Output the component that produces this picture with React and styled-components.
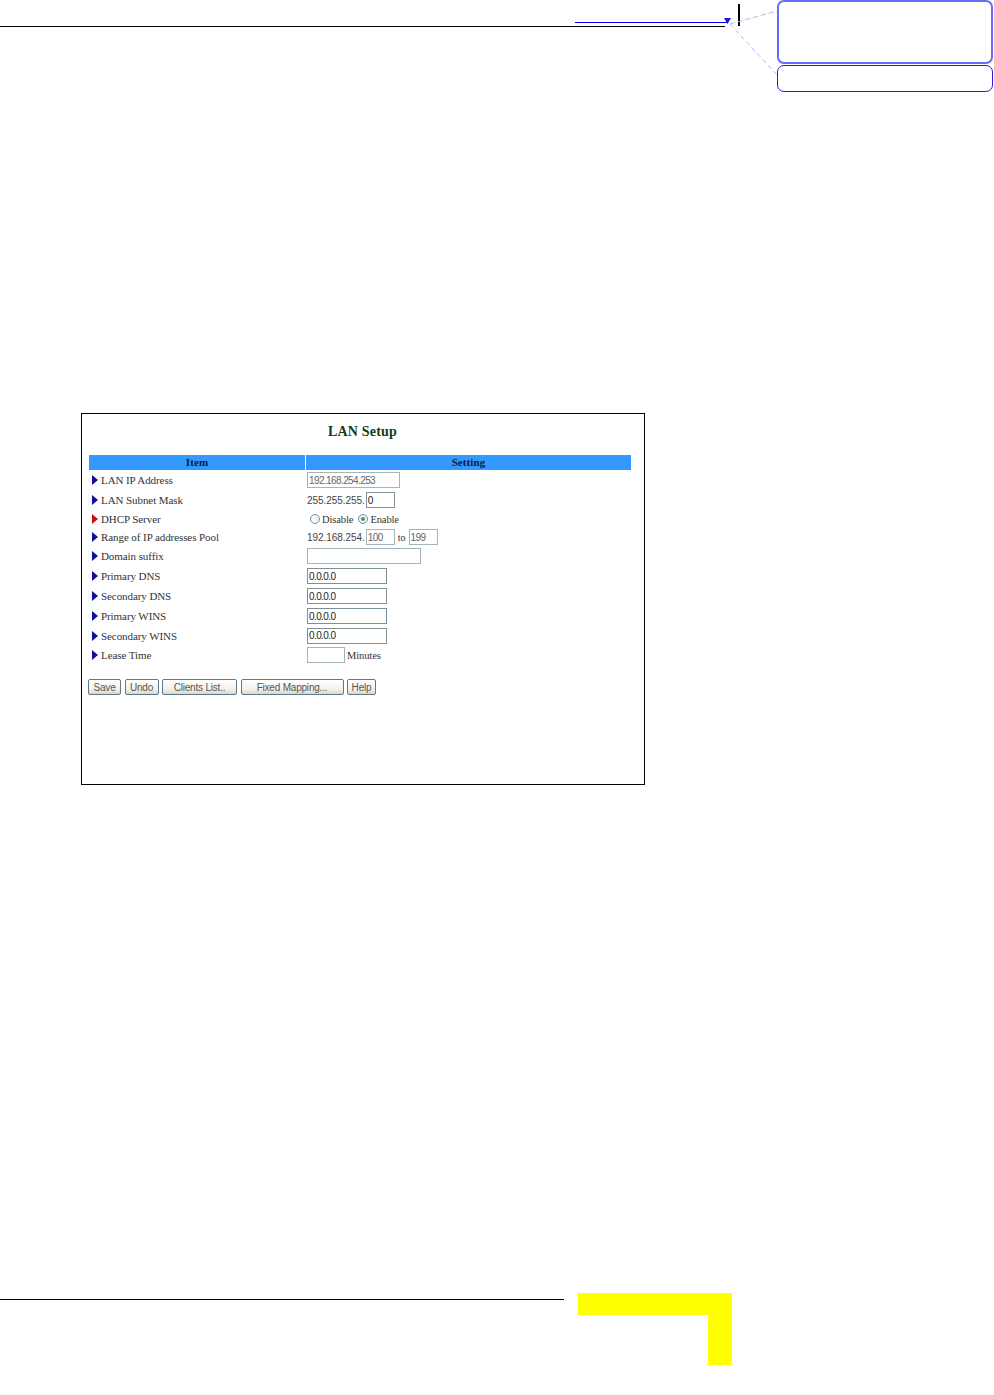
import React from 'react'
import styled, { createGlobalStyle } from 'styled-components'

const GlobalStyle = createGlobalStyle`
  html, body {
    margin: 0;
    padding: 0;
    background: #fff;
  }
`

const Page = styled.div`
  position: relative;
  width: 994px;
  height: 1395px;
  overflow: hidden;
  display: flex;
  flex-direction: column;
  font-family: 'Liberation Serif', serif;
`

const Header = styled.header`
  display: flex;
  height: 92px;
  flex: none;
`

const HeaderRule = styled.div`
  width: 725px;
  height: 26px;
  border-bottom: 1px solid #000;
  flex: none;
`

const RunningLink = styled.div`
  width: 152px;
  height: 22px;
  margin-left: 575px;
  border-bottom: 1px solid #0000ff;
`

const ChangeBar = styled.div`
  width: 2px;
  height: 22px;
  margin: 4px 0 0 13px;
  background: #000;
  flex: none;
`

const Callouts = styled.div`
  display: flex;
  flex-direction: column;
  gap: 1px;
  margin-left: 37px;
  width: 216px;
`

const Callout = styled.div`
  box-sizing: border-box;
  height: ${(p) => p.$h}px;
  border: ${(p) => (p.$strong ? '2px solid #6a6af8' : '1px solid #2020e0')};
  border-radius: 7px;
  background: #fff;
`

const Leaders = styled.svg`
  position: absolute;
  top: 0;
  left: 720px;
`

const Panel = styled.section`
  box-sizing: border-box;
  width: 564px;
  height: 372px;
  margin: 321px 0 0 81px;
  padding: 9px 13px 0 7px;
  border: 1px solid #000;
  flex: none;
`

const Title = styled.h1`
  margin: 0 0 15px;
  height: 17px;
  line-height: 17px;
  padding-left: 5px;
  font-size: 14px;
  font-weight: 700;
  letter-spacing: 0.2px;
  text-align: center;
  color: #123d12;
`

const TableHead = styled.div`
  display: grid;
  grid-template-columns: 216px 325px;
  gap: 1px;
  width: 542px;
`

const HeadCell = styled.div`
  height: 15px;
  line-height: 15px;
  background: #3399ff;
  font-size: 11px;
  font-weight: 700;
  letter-spacing: 0.1px;
  text-align: center;
  color: #10203a;
`

const Row = styled.div`
  display: grid;
  grid-template-columns: 217px 1fr;
  align-items: center;
  height: ${(p) => p.$h}px;
`

const Label = styled.div`
  display: flex;
  align-items: center;
  gap: 3px;
  padding-left: 3px;
  font-size: 11px;
  letter-spacing: -0.08px;
  color: #333;
`

const Arrow = styled.svg`
  width: 6px;
  height: 10px;
  flex: none;
`

const Setting = styled.div`
  display: flex;
  align-items: center;
  padding-left: 1px;
  font-size: 10.5px;
  color: #333;
`

const Field = styled.input`
  box-sizing: border-box;
  width: ${(p) => p.$w}px;
  height: 16px;
  margin: 0;
  padding: 0 1px;
  border: 1px solid ${(p) => (p.$dark ? '#7d8f98' : '#a3b5ba')};
  border-radius: 0;
  outline: none;
  background: #fff;
  font-family: 'Liberation Sans', sans-serif;
  font-size: 10px;
  letter-spacing: -0.6px;
  color: ${(p) => (p.$dark ? '#222' : '#666')};
`

const Plain = styled.span`
  font-family: 'Liberation Sans', sans-serif;
  font-size: 10px;
  letter-spacing: -0.05px;
  margin-right: 1px;
  color: #444;
  white-space: nowrap;
`

const RadioGroup = styled.div`
  display: flex;
  align-items: center;
  padding-left: 3px;
  letter-spacing: -0.1px;
`

const Radio = styled.span`
  box-sizing: border-box;
  display: flex;
  align-items: center;
  justify-content: center;
  width: 10px;
  height: 10px;
  margin: ${(p) => (p.$checked ? '0 2px 0 5px' : '0 2px 0 0')};
  border: 1px solid #6f8ca3;
  border-radius: 50%;
  background: #f4f6f6;

  &::after {
    content: '';
    display: ${(p) => (p.$checked ? 'block' : 'none')};
    width: 4px;
    height: 4px;
    border-radius: 50%;
    background: #3f9a58;
  }
`

const To = styled.span`
  margin: 0 3px;
  font-size: 10px;
  color: #333;
`

const Minutes = styled.span`
  margin-left: 2px;
  letter-spacing: -0.1px;
  color: #333;
`

const Buttons = styled.div`
  display: flex;
  gap: 3.5px;
  margin: 14px 0 0 -1px;
`

const Button = styled.button`
  box-sizing: border-box;
  width: ${(p) => p.$w}px;
  height: 16px;
  padding: 0;
  border: 1px solid #5d7a8c;
  border-radius: 2px;
  background: linear-gradient(#ffffff, #f1efe6 70%, #d9d6c8);
  font-family: 'Liberation Sans', sans-serif;
  font-size: 10px;
  letter-spacing: -0.2px;
  color: #555;
`

const Footer = styled.footer`
  display: flex;
  align-items: flex-start;
  margin-top: 508px;
`

const FooterRule = styled.div`
  width: 564px;
  height: 6px;
  border-bottom: 1px solid #000;
  flex: none;
`

const PageTab = styled.div`
  box-sizing: border-box;
  width: 154px;
  height: 72px;
  margin-left: 14px;
  border-top: 22px solid #ffff00;
  border-right: 24px solid #ffff00;
  flex: none;
`

const rows = [
  { label: 'LAN IP Address', h: 20, kind: 'ip' },
  { label: 'LAN Subnet Mask', h: 20, kind: 'mask' },
  { label: 'DHCP Server', h: 18, kind: 'dhcp', active: true },
  { label: 'Range of IP addresses Pool', h: 18, kind: 'pool' },
  { label: 'Domain suffix', h: 20, kind: 'suffix' },
  { label: 'Primary DNS', h: 20, kind: 'dns' },
  { label: 'Secondary DNS', h: 20, kind: 'dns' },
  { label: 'Primary WINS', h: 20, kind: 'dns' },
  { label: 'Secondary WINS', h: 19, kind: 'dns' },
  { label: 'Lease Time', h: 20, kind: 'lease' },
]

const actions = [
  { text: 'Save', w: 33 },
  { text: 'Undo', w: 34 },
  { text: 'Clients List..', w: 75 },
  { text: 'Fixed Mapping...', w: 103 },
  { text: 'Help', w: 29 },
]

const SettingControl = ({ kind }) => {
  if (kind === 'ip') return <Field $w={93} readOnly value="192.168.254.253" />
  if (kind === 'mask') {
    return (
      <>
        <Plain>255.255.255.</Plain>
        <Field $w={29} $dark readOnly value="0" />
      </>
    )
  }
  if (kind === 'dhcp') {
    return (
      <RadioGroup>
        <Radio />
        <span>Disable</span>
        <Radio $checked />
        <span>Enable</span>
      </RadioGroup>
    )
  }
  if (kind === 'pool') {
    return (
      <>
        <Plain>192.168.254.</Plain>
        <Field $w={29} readOnly value="100" />
        <To>to</To>
        <Field $w={29} readOnly value="199" />
      </>
    )
  }
  if (kind === 'suffix') return <Field $w={114} readOnly value="" />
  if (kind === 'lease') {
    return (
      <>
        <Field $w={38} readOnly value="" />
        <Minutes>Minutes</Minutes>
      </>
    )
  }
  return <Field $w={80} $dark readOnly value="0.0.0.0" />
}

const App = () => {
  return (
    <Page>
      <GlobalStyle />
      <Header>
        <HeaderRule>
          <RunningLink />
        </HeaderRule>
        <ChangeBar />
        <Callouts>
          <Callout $h={64} $strong />
          <Callout $h={27} />
        </Callouts>
      </Header>
      <Leaders width="60" height="80" viewBox="0 0 60 80">
        <path d="M10 24 L57 11 M10 24 L57 75" fill="none" stroke="#b4b4ff" strokeWidth="1" strokeDasharray="5 3" />
        <polygon points="4,18 11,18 7.5,24" fill="#1a1acc" />
      </Leaders>

      <Panel>
        <Title>LAN Setup</Title>
        <TableHead>
          <HeadCell>Item</HeadCell>
          <HeadCell>Setting</HeadCell>
        </TableHead>
        {rows.map((row) => (
          <Row key={row.label} $h={row.h}>
            <Label>
              <Arrow viewBox="0 0 6 10">
                <polygon points="0,0 6,5 0,10" fill={row.active ? '#cc1111' : '#10109a'} />
              </Arrow>
              {row.label}
            </Label>
            <Setting>
              <SettingControl kind={row.kind} />
            </Setting>
          </Row>
        ))}
        <Buttons>
          {actions.map((action) => (
            <Button key={action.text} $w={action.w}>
              {action.text}
            </Button>
          ))}
        </Buttons>
      </Panel>

      <Footer>
        <FooterRule />
        <PageTab />
      </Footer>
    </Page>
  )
}

export default App
